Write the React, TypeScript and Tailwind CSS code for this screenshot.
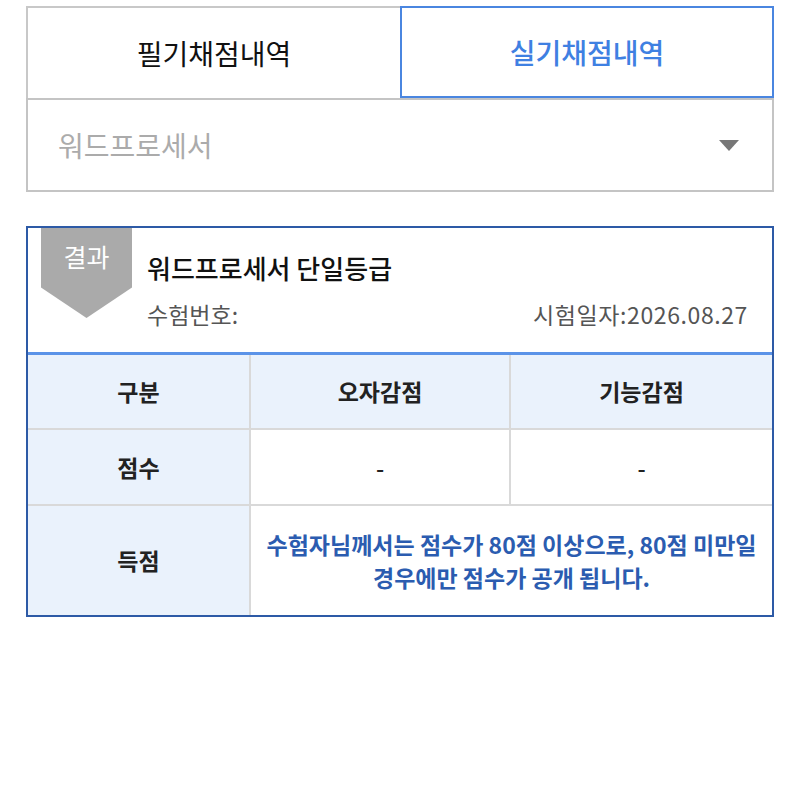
const FONT = "font-['Noto_Sans_CJK_KR','Noto_Sans',sans-serif]";

const headers = ['구분', '오자감점', '기능감점'];

function Cell({
  children,
  className = '',
}: {
  children: React.ReactNode;
  className?: string;
}) {
  return (
    <div className={`flex items-center justify-center border-[#d9d9d9] ${className}`}>
      {children}
    </div>
  );
}

export default function App() {
  return (
    <div className={`${FONT} min-h-[800px] w-[800px] bg-white px-[26px] pt-[6px]`}>
      {/* Tabs */}
      <div className="flex h-[92px]">
        <button
          type="button"
          className="flex w-[374px] items-center justify-center border-l-2 border-t-2 border-[#c8c8c8] text-[28px] text-[#111]"
        >
          필기채점내역
        </button>
        <button
          type="button"
          className="flex w-[374px] items-center justify-center border-2 border-[#4a86e0] text-[28px] font-medium text-[#3f80e2]"
        >
          실기채점내역
        </button>
      </div>

      {/* Select */}
      <div className="flex h-[94px] items-center justify-between border-2 border-[#c4c4c4] pl-[30px] pr-[33px]">
        <span className="text-[28px] text-[#ababab]">워드프로세서</span>
        <span className="h-0 w-0 border-x-[10px] border-t-[11px] border-x-transparent border-t-[#777]" />
      </div>

      {/* Result */}
      <div className="relative mt-[34px] border-2 border-[#2d5aa6]">
        <div className="absolute left-[13px] top-0 flex h-[90px] w-[91px] justify-center bg-[#aaaaaa] pt-[12px] text-[25px] leading-[32px] text-white [clip-path:polygon(0_0,100%_0,100%_66%,50%_100%,0_66%)]">
          결과
        </div>
        <div className="pb-[23px] pl-[119px] pr-[24px] pt-[23px]">
          <h2 className="text-[26px] font-medium leading-[34px] text-[#111]">
            워드프로세서 단일등급
          </h2>
          <div className="mt-[14px] flex justify-between text-[23px] leading-[30px] text-[#555]">
            <span>수험번호:</span>
            <span className="tracking-[0.6px]">시험일자:2026.08.27</span>
          </div>
        </div>
        <div className="h-[3px] bg-[#5b93e8]" />

        <div className="grid grid-cols-[223px_260px_1fr] text-[23px] font-bold text-[#222]">
          {headers.map((h, i) => (
            <Cell
              key={h}
              className={`h-[75px] border-b-2 bg-[#eaf2fc] ${i < 2 ? 'border-r-2' : ''}`}
            >
              {h}
            </Cell>
          ))}

          <Cell className="h-[76px] border-b-2 border-r-2 bg-[#eaf2fc]">점수</Cell>
          <Cell className="h-[76px] border-b-2 border-r-2 font-medium">-</Cell>
          <Cell className="h-[76px] border-b-2 font-medium">-</Cell>

          <Cell className="h-[109px] border-r-2 bg-[#eaf2fc]">득점</Cell>
          <Cell className="col-span-2 h-[109px]">
            <p className="text-center leading-[33px] text-[#2b5cb0]">
              수험자님께서는 점수가 80점 이상으로, 80점 미만일
              <br />
              경우에만 점수가 공개 됩니다.
            </p>
          </Cell>
        </div>
      </div>
    </div>
  );
}
